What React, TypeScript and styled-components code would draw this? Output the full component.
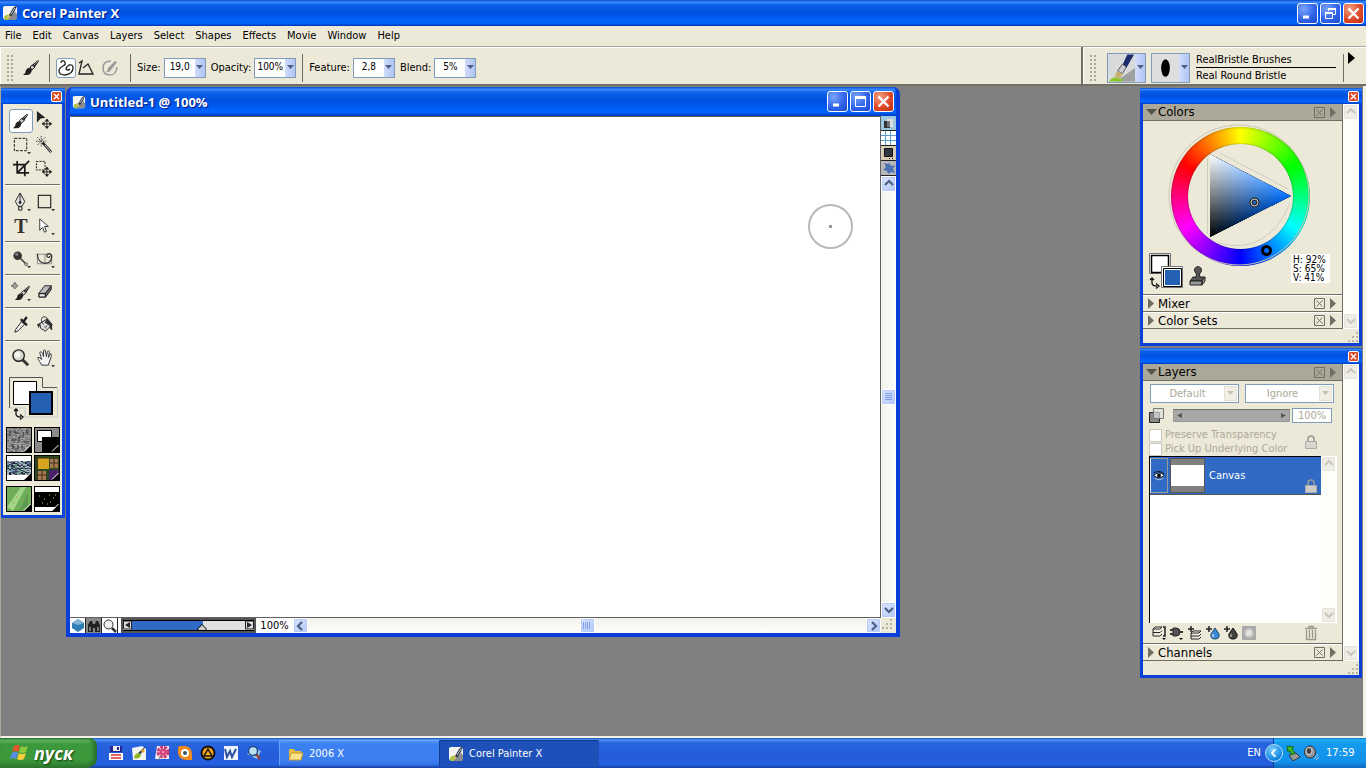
import React from "react";
import styled, { createGlobalStyle, css } from "styled-components";

const Global = createGlobalStyle`
  * { box-sizing: border-box; }
  body { margin: 0; font-family: "DejaVu Sans Condensed", "DejaVu Sans", sans-serif; font-size: 11px; line-height: 14px; color: #000; }
  button, input, select { font: inherit; color: inherit; margin: 0; padding: 0; border: 0; background: none; border-radius: 0; }
  svg { display: block; flex: none; }
`;

const titleGradient = "linear-gradient(#0a48c8 0, #3a8bff 8%, #0a5fe8 20%, #0050e0 50%, #0060fb 75%, #0064ff 88%, #0038b8 100%)";

/* ---------- shell ---------- */
const Shell = styled.div`display: flex; flex-direction: column; min-height: 100vh; background: #ece9d8;`;
const TitleBar = styled.header<{ $h: number }>`
  display: flex; align-items: center; gap: 4px; height: ${p => p.$h}px; flex: none;
  padding: 0 2px; background: ${titleGradient};
`;
const Title = styled.h1`
  flex: 1; margin: 0; color: #fff; font: bold 13px/18px "Open Sans", "Noto Sans", sans-serif;
  text-shadow: 1px 1px 1px #0a1883; white-space: nowrap;
`;
const Buttons = styled.div`display: flex; gap: 2px;`;
const WinButton = styled.button<{ $close?: boolean }>`
  width: 21px; height: 21px; border: 1px solid #fff; border-radius: 3px; display: grid; place-items: center;
  background: ${p => p.$close
    ? "radial-gradient(circle at 30% 25%, #f0a080, #e0492a 55%, #b8300c)"
    : "radial-gradient(circle at 30% 25%, #7ba4f8, #3265ea 55%, #1a48cc)"};
`;
const MenuBar = styled.nav`
  display: flex; gap: 11px; height: 20px; padding: 2px 5px 0; flex: none;
  a { color: #000; text-decoration: none; line-height: 15px; }
`;
const Toolbar = styled.div`
  display: flex; flex: none; height: 40px; border-top: 1px solid #aca899;
  border-bottom: 2px solid #716f64; box-shadow: inset 0 1px #fff;
`;
const Strip = styled.div<{ $grow?: boolean }>`
  display: flex; align-items: center; padding: 4px 0 0 5px; border-left: 1px solid #fff;
  ${p => p.$grow ? css`flex: 1; border-right: 2px solid #716f64;` : css`width: 283px;`}
`;
const Grip = styled.div`
  width: 7px; height: 27px;
  background: radial-gradient(circle, #aaa797 1px, transparent 1px) 0 0 / 4px 4px;
`;
const Divider = styled.div`width: 1px; height: 28px; background: #716f64;`;
const ToolButton = styled.button<{ $on?: boolean; $s?: number }>`
  width: ${p => p.$s ?? 20}px; height: ${p => p.$s ?? 20}px; display: grid; place-items: center; flex: none;
  ${p => p.$on && css`background: #fff; border: 1px solid #7f9db9; border-radius: 3px;`}
`;
const TypeGlyph = styled.span`
  width: 24px; font: bold 20px/24px "Liberation Serif", "Times New Roman", serif; color: #333; text-align: center;
`;
const Field = styled.label`display: flex; align-items: center; gap: 3px; white-space: nowrap;`;
const Combo = styled.span<{ $w: number }>`
  display: flex; width: ${p => p.$w}px; height: 20px; border: 1px solid #7f9db9; background: #fff;
  input { flex: 1; min-width: 0; text-align: center; font-size: 10px; padding-bottom: 1px; }
`;
const Drop = styled.button<{ $w?: number }>`
  width: ${p => p.$w ?? 10}px; flex: none; display: grid; place-items: center;
  background: linear-gradient(90deg, #d0dcfb, #b0c4f4);
`;
const BrushTile = styled.div`
  display: flex; width: 39px; height: 30px; border: 1px solid #7f9db9; background: #dedede;
  > svg { flex: 1; }
`;
const BrushNames = styled.div`
  width: 140px; margin-left: 6px; line-height: 15px;
  div + div { border-top: 1px solid #000; }
`;

/* ---------- workspace and windows ---------- */
const Workspace = styled.main`
  position: relative; flex: 1; min-height: 600px; background: #808080; overflow: hidden;
  border-left: 1px solid #aca899; border-right: 3px solid #f4f2e8; border-bottom: 2px solid #f4f2e8;
`;
const Palette = styled.section<{ $top: number }>`
  position: absolute; right: 1px; top: ${p => p.$top}px; width: 222px;
  border: solid #0a3fd8; border-width: 0 3px 3px; background: #ece9d8;
`;
const PaletteTitle = styled.div`
  display: flex; justify-content: flex-end; align-items: center; height: 16px; margin: 0 -3px; padding-right: 3px;
  background: ${titleGradient};
`;
const SmallClose = styled.button`
  width: 11px; height: 11px; border: 1px solid #fff; border-radius: 2px; background: #dc4b28; display: grid; place-items: center;
`;
const Toolbox = styled.section`
  position: absolute; left: 0; top: 2px; width: 64px; background: #ece9d8;
  border: solid #0a45dc; border-width: 0 3px 3px 2px;
`;
const ToolGroups = styled.div`padding: 5px 2px 0;`;
const ToolGroup = styled.div`
  display: grid; grid-template-columns: 24px 24px; padding-left: 4px;
  & + & { margin-top: 3px; padding-top: 5px; border-top: 1px solid #716f64; box-shadow: inset 0 1px #fff; }
`;
const ColorPair = styled.div`height: 47px; margin: 4px 2px 6px; padding: 3px 0 0 4px;`;
const Tiles = styled.div`display: grid; grid-template-columns: 26px 26px; gap: 2px; padding: 0 0 3px 3px;
  button:nth-child(n+5) { margin-top: 3px; }`;
const Tile = styled.button`width: 26px; height: 26px; border: 1px solid #000; background: #fff;`;

const DocWindow = styled.section`
  position: absolute; left: 65px; top: 1px; width: 834px; height: 550px; display: flex; flex-direction: column;
  border: solid #0a3fdc; border-width: 0 4px 4px; border-radius: 7px 7px 0 0; overflow: hidden;
  background: #0a3fdc;
`;
const DocBody = styled.div`
  flex: 1; display: grid; grid-template: 1fr 15px / 1fr 15px; background: #ece9d8; min-height: 0;
`;
const Sheet = styled.div`
  position: relative; background: #fff; border: 1px solid #606060; border-left: 0;
`;
const BrushCursor = styled.div`
  position: absolute; right: 27px; top: 87px; width: 45px; height: 45px; border: 2px solid #b8b8b8; border-radius: 50%;
  display: grid; place-items: center;
  &::after { content: ""; width: 3px; height: 3px; background: #999; }
`;
const SideBar = styled.div`display: flex; flex-direction: column;`;
const SideIcon = styled.button<{ $bg: string }>`
  height: 15px; background: ${p => p.$bg}; border-bottom: 1px solid #222; display: grid; place-items: center; flex: none;
`;
const Track = styled.div<{ $row?: boolean }>`
  flex: 1; display: flex; flex-direction: ${p => p.$row ? "row" : "column"}; align-items: stretch; min-height: 0;
  background: linear-gradient(${p => p.$row ? "180deg" : "90deg"}, #f2f1ea, #fefefb);
`;
const Spacer = styled.div`flex: 1;`;
const ScrollButton = styled.button<{ $off?: boolean; $short?: boolean }>`
  width: 15px; height: ${p => p.$short ? 15 : 16}px; flex: none; display: grid; place-items: center; border: 1px solid #fff; border-radius: 2px;
  color: ${p => p.$off ? "#c9c7ba" : "#4d6185"};
  background: ${p => p.$off ? "#efeee6" : "linear-gradient(135deg, #dbe5ff, #b3c8f7)"};
  box-shadow: inset 0 0 0 1px ${p => p.$off ? "#e5e3d8" : "#b8cbf6"};
`;
const DocStatus = styled.div`display: flex; background: #fff; min-width: 0;`;
const StatusButton = styled.button<{ $bg?: string }>`
  width: 16px; display: grid; place-items: center; background: ${p => p.$bg ?? "#fff"}; border-right: 1px solid #222;
`;
const ZoomSlider = styled.div`
  width: 135px; border: 2px solid #555; display: flex; margin-left: 3px;
`;
const ZoomText = styled.span`width: 37px; text-align: center; line-height: 15px; background: #fff;`;

/* ---------- palettes on the right ---------- */
const PaletteBody = styled.div`display: flex;`;
const Sections = styled.div`width: 201px; border-right: 1px solid #716f64;`;
const SectionHead = styled.div<{ $open?: boolean }>`
  display: flex; align-items: center; height: 17px; padding: 0 6px 0 ${p => p.$open ? 3 : 4}px; font-size: 13px;
  border-bottom: 1px solid #716f64; border-top: ${p => p.$open ? "0" : "1px solid #fff"};
  background: ${p => p.$open ? "#aca899" : "#ece9d8"};
  span { flex: 1; margin-left: ${p => p.$open ? 1 : 4}px; }
  svg:last-child { margin-left: 4px; }
`;
const PaletteFoot = styled.div`height: 15px; display: flex; justify-content: flex-end; align-items: flex-end; border-top: 1px solid #716f64; margin-top: -1px;`;
const PaletteScroll = styled.div`
  width: 16px; display: flex; flex-direction: column; justify-content: space-between; background: #fefefb;
`;
const ColorsBody = styled.div`position: relative; height: 174px; border-bottom: 1px solid #716f64; padding: 3px 0 0 25px;`;
const Wheel = styled.div`
  position: relative; width: 145px; height: 145px; display: grid; place-items: center;
  border-radius: 50%;
  > svg { position: absolute; inset: 0; }
`;
const Ring = styled.div`
  width: 139px; height: 139px; border-radius: 50%; display: grid; place-items: center;
  background: conic-gradient(#ff0, #0f0 60deg, #0ff 120deg, #00f 180deg, #f0f 240deg, #f00 300deg, #ff0);
  box-shadow: inset 0 0 3px rgba(0,0,0,.4);
  &::after { content: ""; width: 105px; height: 105px; border-radius: 50%; background: #ece9d8; box-shadow: 0 0 2px rgba(0,0,0,.5); }
`;
const Triangle = styled.g`isolation: isolate; path + path { mix-blend-mode: plus-lighter; }`;
const Swatches = styled.div`position: absolute; left: 5px; bottom: 5px;`;
const Readout = styled.div`
  position: absolute; right: 12px; bottom: 11px; width: 39px; height: 29px; padding: 1px 0 0 2px; background: #fff;
  font-size: 10px; line-height: 9px; white-space: nowrap;
`;
const LayerControls = styled.div`display: flex; flex-direction: column; padding: 3px 6px 0; color: #aca899;`;
const SelectRow = styled.div`display: flex; gap: 6px; padding-left: 1px;`;
const SelectBox = styled.label`
  display: flex; width: 89px; height: 19px; border: 1px solid #7f9db9; background: #fff; padding-right: 1px;
  select { appearance: none; flex: 1; min-width: 0; text-align: center; text-align-last: center; color: #aca899; opacity: 1; }
  span { width: 13px; height: 15px; margin-top: 1px; display: grid; place-items: center; background: #f0efe6; border: 1px solid #e3e1d5; }
`;
const OpacityRow = styled.div`display: flex; align-items: center; height: 25px; padding-right: 4px;
  input { width: 40px; height: 15px; border: 1px solid #7f9db9; background: #fff; text-align: center; color: #aca899; margin-left: 2px; }`;
const FlatSlider = styled.div`
  flex: 1; height: 13px; margin-left: 8px; background: #a8a8a8; border: 1px solid #999; border-top-color: #716f64;
  display: flex; justify-content: space-between; align-items: center; padding: 0 3px;
`;
const Checks = styled.div`display: flex; justify-content: space-between; align-items: center; padding-right: 18px;`;
const Check = styled.label`
  display: flex; align-items: center; gap: 3px; height: 14px; white-space: nowrap;
  input { appearance: none; width: 13px; height: 13px; background: #fff; border: 1px solid #cac8bb; }
`;
const LayerList = styled.div`display: flex; height: 167px; margin: 0 0 0 6px; width: 188px;`;
const LayerItems = styled.div`flex: 1; background: #fff; border-top: 1px solid #000; border-left: 1px solid #000;`;
const LayerRow = styled.div`
  display: flex; align-items: center; height: 38px; background: #316ac5; color: #fff; padding: 1px 3px 1px 0; border-bottom: 1px solid #555;
  > svg { align-self: flex-end; }
  span { flex: 1; margin-left: 4px; }
`;
const EyeBox = styled.div`width: 18px; height: 35px; border: 1px solid #9a9a9a; border-left-color: #eee; display: grid; place-items: center;`;
const Thumb = styled.div`width: 35px; height: 35px; border: 1px solid #555; margin-left: 2px; background: linear-gradient(#808080 6px, #fff 6px 27px, #808080 27px);`;
const LayerIcons = styled.div`display: flex; height: 21px; align-items: center; padding: 0 23px 0 8px; gap: 2px; border-bottom: 1px solid #716f64;
  button:last-child { margin-left: auto; }`;

/* ---------- taskbar ---------- */
const Taskbar = styled.footer`
  display: flex; height: 30px; flex: none; color: #fff;
  background: linear-gradient(#1f4fb4 0, #4a93f5 6%, #2a66e0 16%, #245ddb 50%, #2460e0 88%, #1941a5 100%);
`;
const Start = styled.button`
  display: flex; align-items: center; gap: 4px; width: 97px; padding: 0 0 1px 10px; border-radius: 0 8px 10px 0;
  font: italic bold 18px/24px "Open Sans", "Noto Sans", sans-serif; color: #fff; text-shadow: 1px 1px 2px #143d0f;
  background: linear-gradient(#2c7f2c 0, #62b862 8%, #3c983c 20%, #3c9a3c 70%, #2f7c2f 100%);
  box-shadow: inset -3px 0 4px #27692a;
`;
const Quick = styled.div`display: flex; align-items: center; gap: 5px; width: 182px; padding-left: 10px;`;
const Task = styled.button<{ $on?: boolean }>`
  display: flex; align-items: center; gap: 5px; width: 160px; height: 26px; margin-top: 2px; padding: 1px 0 0 9px; border-radius: 2px; color: #fff;
  background: ${p => p.$on ? "#1d50b8" : "linear-gradient(#5a9cfb, #3c81f3 15%, #3a7df0 85%, #2c68dc)"};
  box-shadow: inset 1px 1px 1px ${p => p.$on ? "#123a8c" : "#6aa6ff"};
`;
const Lang = styled.span`margin-left: auto; line-height: 30px; padding-right: 12px;`;
const Tray = styled.div`
  display: flex; align-items: center; width: 93px; gap: 2px;
  background: linear-gradient(#0f70c8 0, #25b0f8 6%, #149bf0 16%, #1290ea 80%, #1068c0 100%); border-left: 1px solid #0b3f94;
  time { margin-left: 5px; }
`;
const TrayArrow = styled.button`
  width: 18px; height: 18px; margin-left: -9px; border-radius: 50%; display: grid; place-items: center;
  background: radial-gradient(circle at 40% 30%, #7fd0ff, #1b8fe8 60%, #0f60c0); border: 1px solid #b8defc;
`;

/* ---------- icons ---------- */
type IconProps = { w?: number; h?: number; box?: string; children: React.ReactNode };
const Icon = ({ w = 16, h = w, box, children }: IconProps) => (
  <svg width={w} height={h} viewBox={box ?? `0 0 ${w} ${h}`} fill="none" aria-hidden="true">{children}</svg>
);
const Arrow = ({ c = "#4d6185" }: { c?: string }) => <Icon w={7} h={5}><path d="M0 0h7L3.5 4z" fill={c} /></Icon>;
const Chevron = ({ d }: { d: "up" | "down" | "left" | "right" }) => {
  const paths = { up: "M1 6l4-4 4 4", down: "M1 3l4 4 4-4", left: "M6 1L2 5l4 4", right: "M3 1l4 4-4 4" };
  return <Icon w={10}><path d={paths[d]} stroke="currentColor" strokeWidth="2.2" /></Icon>;
};
const AppIcon = ({ s = 16 }: { s?: number }) => (
  <Icon w={s} box="0 0 16 16">
    <path d="M1 2l2-1h11l1 2v10l-2 2H3l-2-2z" fill="#f4f5f3" />
    <path d="M2 13c0-3 3-4 6-3l1 2-3 3H3z" fill="#a8c43a" /><path d="M6 14l7-7 2 2v5l-2 1H6z" fill="#8a8d90" />
    <path d="M15 0l-4 3-4 7 2 2 4-6z" fill="#333b46" /><path d="M6 9l3 3-4 2z" fill="#cdb96a" /><path d="M13 3l-4 6" stroke="#c9d1da" />
  </Icon>
);
const brushShape = <><path d="M1 16q3-2 3-5 2-3 5-2l1 2q-1 5-5 5z" fill="#222" /><path d="M8 8l2-2 3 2-3 3z" fill="#ccc" stroke="#222" /><path d="M10 6l6-5 1 1-4 6z" fill="#222" /><path d="M12 6l4-4" stroke="#999" /></>;
const Brush = () => <Icon w={18}>{brushShape}</Icon>;
const Cross4 = ({ x = 0, y = 0 }) => (
  <g transform={`translate(${x} ${y})`}>
    <path d="M5.500 1v9M1 5.500h9" stroke="#222" /><path d="M5.500 0l2.500 3H3zM5.500 11L8 8H3zM0 5.500L3 3v5zM11 5.500L8 3v5z" fill="#222" />
  </g>
);
const Corner = () => <path d="M17 18h4l-2 2z" fill="#000" />;
const tools: Record<string, React.ReactNode> = {
  Brush: <g transform="translate(1 2)">{brushShape}</g>,
  "Layer Adjuster": <><path d="M2 0v12l4-4 5-1z" fill="#222" /><Cross4 x={7} y={8} /></>,
  "Rectangular Selection": <><rect x="3.500" y="3.500" width="13" height="13" stroke="#111" strokeDasharray="3 1.300" /><Corner /></>,
  "Magic Wand": <><path d="M8 8l9 10" stroke="#222" strokeWidth="2.600" /><path d="M10 10l7 8" stroke="#d8d8d8" /><path d="M6.500 1v11M1 6.500h11M2.500 2.500l8 8M10.500 2.500l-8 8" stroke="#333" strokeDasharray="1.500 1" /></>,
  Crop: <path d="M6.500 2v12.500H19M2 6h12.500v12M6 15L19 2" stroke="#1a1a1a" strokeWidth="1.800" />,
  "Selection Adjuster": <><rect x="1.500" y="2.500" width="9" height="9" stroke="#111" strokeDasharray="2 1.200" /><Cross4 x={7} y={8} /></>,
  Pen: <><path d="M9.500 1l5 9-3 5h-4l-3-5zM8 15.500h3.500V19H8z" fill="#e4e4e4" stroke="#222" /><path d="M9.500 2v8" stroke="#222" /><circle cx="9.500" cy="11" r="1.500" fill="#222" /><Corner /></>,
  "Rectangular Shape": <><rect x="3.500" y="3.500" width="13" height="13" stroke="#222" strokeWidth="1.200" /><Corner /></>,
  "Shape Selection": <><path d="M5 3v12l3-3 2 5 2-1-2-5h4z" fill="#fff" stroke="#333" /><Corner /></>,
  Dodge: <><circle cx="7" cy="7" r="4.500" fill="#333" /><circle cx="6" cy="5.500" r="1.800" fill="#777" /><path d="M10 10l6 6" stroke="#333" strokeWidth="1.500" /><circle cx="16" cy="16" r="1.500" fill="#ccc" stroke="#555" /><Corner /></>,
  "Perspective Grid": <><path d="M2.500 5.500h15v10h-15zM10.500 5v11" stroke="#888" /><path d="M2.500 5c0 6 3 10 8 10s7-3 7-7-5-4-5-1 4 2 3 0" stroke="#333" strokeWidth="1.300" /><Corner /></>,
  Cloner: <><path d="M4 1l3 3-3 3-3-3z" stroke="#444" /><path d="M4 0v8M0 4h8" stroke="#444" strokeDasharray="1 1" /><g transform="translate(3 3)">{brushShape}</g><Corner /></>,
  Eraser: <><path d="M4 12l6-8h7l-6 8z" fill="#bbb" stroke="#222" /><path d="M4 12h7v4H4zM11 12l6-8v4l-6 8z" fill="#666" stroke="#222" /><path d="M5 13h5v2H5z" fill="#eee" /></>,
  Dropper: <><path d="M11 5l5 5M13 7l3-4" stroke="#222" strokeWidth="2.600" strokeLinecap="round" /><path d="M11 7l3 3-7 7-3 1 1-3z" fill="#eee" stroke="#222" /></>,
  "Paint Bucket": <><path d="M5 9l8-5 5 6-7 7-5-3z" fill="#ddd" stroke="#222" /><path d="M9 10c-4-5-2-9 2-8q3 1 2 6" stroke="#222" /><path d="M13 4l5 6v6l-2-1-1-4-5-3z" fill="#333" /><path d="M2 10l4-2-2 6z" fill="#333" /><path d="M9 12l5-2-3 5z" fill="#999" /></>,
  Magnifier: <><path d="M12 12l6 6" stroke="#333" strokeWidth="3" /><circle cx="8" cy="8" r="6" fill="#d7d7cd" stroke="#222" strokeWidth="1.500" /><circle cx="7" cy="7" r="3" fill="#f6f6f0" /></>,
  Grabber: <><path d="M7 18c-1-3-4-5-4-8 2-1 3 2 4 2L5 5c1-2 2-1 3 1l1 3V3c1-2 2-1 2 0l1 6 1-5c1-2 2-1 2 1l-1 5 2-4c2 0 1 2 1 3l-3 9z" fill="#f2f2f2" stroke="#333" /><Corner /></>,
};
const ToolIcon = ({ name }: { name: string }) =>
  name === "Text" ? <TypeGlyph>T</TypeGlyph> : <Icon w={20} box="0 0 21 21">{tools[name]}</Icon>;
const Tri = ({ open }: { open?: boolean }) => open
  ? <Icon w={11} h={8}><path d="M0 1h11L5.500 7z" fill="#55534b" /></Icon>
  : <Icon w={7} h={11}><path d="M1 0v11l6-5.500z" fill="#716f64" /></Icon>;
const BoxX = () => <Icon w={11}><path d="M.5.500h10v10H.500zM2.500 2.500l6 6M8.500 2.500l-6 6" stroke="#716f64" /></Icon>;
const CloseGlyph = ({ s = 13 }) => <Icon w={s} box="0 0 13 13"><path d="M1.500 1.500l10 10M11.500 1.500l-10 10" stroke="#fff" strokeWidth="2.400" /></Icon>;
const MinGlyph = () => <Icon w={13}><path d="M2 10h6" stroke="#fff" strokeWidth="3" /></Icon>;
const MaxGlyph = () => <Icon w={13}><path d="M1.500 1.500h10v10h-10z" stroke="#fff" /><path d="M1 2.500h11" stroke="#fff" strokeWidth="3" /></Icon>;
const RestoreGlyph = () => <Icon w={13}><path d="M4.500 4V1.500h7v6H9M1.500 5.500h7v6h-7z" stroke="#fff" /><path d="M4 2h8M1 6h8" stroke="#fff" strokeWidth="2" /></Icon>;
const ResizeGrip = () => <Icon w={12}><path d="M9 2h2M5 6h2M9 6h2M1 10h2M5 10h2M9 10h2" stroke="#b8b4a2" strokeWidth="2" /></Icon>;
const Lock = ({ body }: { body: string }) => <Icon w={14}><path d="M4 7V4q0-3 3-3t3 3v3" stroke="#999" strokeWidth="1.500" /><path d="M1.500 6.500h11v7h-11z" fill={body} stroke="#aaa" /></Icon>;
const Eye = () => <Icon w={12} h={11} box="0 0 14 12"><path d="M1 6q6-6 12 0-6 5-12 0z" fill="#fff" stroke="#111" /><circle cx="7" cy="6" r="2.300" fill="#111" /><path d="M1 3q6-4 12 1" stroke="#111" /><path d="M2 9q5 4 10 0" stroke="#ccc" /></Icon>;
const Swap = () => <path d="M3 1v5q0 3 5 3M1 3l2-2 2 2M7 6.500L10 9l-3 2.500" stroke="#111" strokeWidth="1.300" />;
const Noise = ({ colors, y = 0, h = 24, seed = 1 }: { colors: string[]; y?: number; h?: number; seed?: number }) => {
  const cells: React.ReactNode[] = [];
  let n = seed;
  for (let r = 0; r < h; r++) for (let c = 0; c < 24; c += 2) {
    n = (n * 1103515 + 12345) % 2147483;
    cells.push(<rect key={`${r}-${c}`} x={c} y={y + r} width="2" height="1" fill={colors[(n >> 4) % colors.length]} />);
  }
  return <>{cells}</>;
};
const TileMark = () => <><path d="M24 17v7h-7z" fill="#000" /><path d="M17 23.500l6.500-6.500" stroke="#fff" /></>;
const tiles: [string, React.ReactNode][] = [
  ["Paper", <><Noise colors={["#8e8e8e", "#7c7c7c", "#999", "#666", "#7a7a7a", "#a4a4a4", "#808080"]} /><path d="M3 3v5M8 2v3h4M16 4v6M20 2v4M4 12h5M12 9v5M17 14h5M6 16v5M11 18v4M15 17v3" stroke="#333" /></>],
  ["Gradient", <><path d="M0 0h24v24H0z" fill="#8a8a8a" /><path d="M2.500 2.500h14v11h-14z" fill="#fff" stroke="#000" /><path d="M7 9h17v15H7z" fill="#000" /></>],
  ["Pattern", <Noise seed={7} y={5} h={14} colors={["#557", "#8aa", "#345", "#698", "#bbc", "#223", "#68a"]} />],
  ["Weave", <><path d="M0 0h24v24H0z" fill="#2c4a20" /><path d="M3 2h11v11H3z" fill="#d9a520" /><path d="M15 3h8v9h-8zM3 15h8v9H3z" fill="#a87850" /><path d="M14 14h10v10H14z" fill="#4a1f6a" /><path d="M0 2h24M2 0v24M19 3v9M15 7h8M7 15v9M3 19h8" stroke="#403018" /></>],
  ["Nozzle", <><path d="M0 0h24v24H0z" fill="#6fae58" /><path d="M0 20L14 0h5L6 24z" fill="#a4d488" /><path d="M12 24l9-18v14z" fill="#5c9c52" /><path d="M3 4h2M9 10h1M6 16h1M16 14h1" stroke="#b86" /></>],
  ["Look", <><path d="M0 5h24v15H0z" fill="#000" /><path d="M4 9h1M9 12h1M14 8h1M18 11h1M7 16h1M15 15h1M20 8h1M12 17h1" stroke="#9c6" /></>],
];

const Head = ({ name, open }: { name: string; open?: boolean }) => (
  <SectionHead $open={open}><Tri open={open} /><span>{name}</span><BoxX /><Tri /></SectionHead>
);
const PScroll = () => (
  <PaletteScroll><ScrollButton $off aria-label="Scroll up"><Chevron d="up" /></ScrollButton><ScrollButton $off aria-label="Scroll down"><Chevron d="down" /></ScrollButton></PaletteScroll>
);
const NumberField = ({ label, value, w = 42 }: { label: string; value: string; w?: number }) => (
  <Field>{label}<Combo $w={w}><input defaultValue={value} /><Drop as="span"><Arrow /></Drop></Combo></Field>
);
const WindowButtons = ({ restore }: { restore?: boolean }) => (
  <Buttons>
    <WinButton aria-label="Minimize"><MinGlyph /></WinButton>
    <WinButton aria-label="Maximize">{restore ? <RestoreGlyph /> : <MaxGlyph />}</WinButton>
    <WinButton $close aria-label="Close"><CloseGlyph /></WinButton>
  </Buttons>
);
const PTitle = () => <PaletteTitle><SmallClose aria-label="Close palette"><CloseGlyph s={7} /></SmallClose></PaletteTitle>;

const groups = [
  ["Brush", "Layer Adjuster", "Rectangular Selection", "Magic Wand", "Crop", "Selection Adjuster"],
  ["Pen", "Rectangular Shape", "Text", "Shape Selection"],
  ["Dodge", "Perspective Grid"], ["Cloner", "Eraser"], ["Dropper", "Paint Bucket"], ["Magnifier", "Grabber"],
];
const menus = ["File", "Edit", "Canvas", "Layers", "Select", "Shapes", "Effects", "Movie", "Window", "Help"];

const quick: [string, React.ReactNode][] = [
  ["Save", <><path d="M2 1h12v6H2z" fill="#23298c" /><path d="M5 1h7v5H5z" fill="#eee" /><path d="M9 2h2v3H9z" fill="#23298c" /><path d="M1 8h14v7H1z" fill="#fff" /><path d="M3 10h10M3 13h10" stroke="#e03030" strokeWidth="1.500" /></>],
  ["Painter", <><path d="M1 3l10-2 4 3v11H2z" fill="#f4f4ee" /><path d="M15 1L7 8l2 2z" fill="#27414d" /><path d="M3 13q1-5 5-5l2 2q-2 5-7 3z" fill="#8db51e" /><path d="M11 5l2 2" stroke="#e8a030" strokeWidth="3" /></>],
  ["Flower", <><path d="M3 1h12v13H1z" fill="#f8eef2" /><circle cx="9" cy="7" r="5" stroke="#c83c74" strokeWidth="3" strokeDasharray="3 1" /><circle cx="9" cy="7" r="3.500" fill="#d04078" /><circle cx="9" cy="7" r="1.500" fill="#f080a8" /><path d="M7 11l-3 4" stroke="#888" /></>],
  ["Viewer", <><path d="M1 3q0-2 2-2h6q6 2 6 8v6H9Q1 14 1 7z" fill="#f08a1c" /><circle cx="8" cy="8" r="4" fill="#fff" /><circle cx="8" cy="8" r="2" fill="#456" /></>],
  ["Player", <><circle cx="8" cy="8" r="6.500" fill="#f5a81c" stroke="#111" strokeWidth="2" /><path d="M8 4l4 7H4z" fill="#f5a81c" stroke="#111" strokeWidth="1.500" /></>],
  ["Word", <><path d="M1 1h14v14H1z" fill="#eef2fb" /><path d="M2 4l2 8 3-6 2 6 4-8" stroke="#2b4fa0" strokeWidth="2" /></>],
  ["Search", <><path d="M1 9l5-7 9 4-4 8z" fill="#9cc4dc" /><path d="M10 9l4 5" stroke="#a03c2c" strokeWidth="2.200" /><circle cx="7" cy="6" r="4.500" fill="#bfe0ee" stroke="#234a8c" strokeWidth="1.500" /></>],
];

const layerIcons: [string, React.ReactNode][] = [
  ["Layer commands", <><path d="M2 4l2-2h7l-2 2zM2 7.500h7l2-2M2 11h7l2-2M2 4v7" stroke="#222" fill="#fff" /><path d="M12 2h2v9h-2" stroke="#222" strokeWidth="1.500" /><path d="M11 13h4l-2 2z" fill="#000" /></>],
  ["Plug-ins", <><path d="M4 3h3q4 0 4 4t-4 4H4z" fill="#555" stroke="#222" /><path d="M1 5h3M1 9h3M11 7h3" stroke="#333" strokeWidth="2" /><path d="M10 13h4l-2 2z" fill="#000" /></>],
  ["New layer", <><path d="M4 1v6M1 4h6" stroke="#222" strokeWidth="1.500" /><path d="M4 8l2-2h8l-2 2zM4 11h8l2-2M4 14h8l2-2M4 8v6" stroke="#222" fill="#fff" /></>],
  ["New watercolor layer", <><path d="M4 1v6M1 4h6" stroke="#222" strokeWidth="1.500" /><path d="M10 3l4 6q1 5-4 5t-4-5z" fill="#3c8cd8" stroke="#246" /><path d="M8 9v3" stroke="#fff" /></>],
  ["New liquid ink layer", <><path d="M4 1v6M1 4h6" stroke="#222" strokeWidth="1.500" /><path d="M10 3l4 6q1 5-4 5t-4-5z" fill="#444" stroke="#111" /><path d="M8 9v3" stroke="#ddd" /></>],
  ["New mask", <><path d="M1 1h14v14H1z" fill="#aaa" /><circle cx="8" cy="8" r="4.500" fill="#cfcfca" /><circle cx="8" cy="8" r="2.500" fill="#e6e6e0" /></>],
  ["Delete", <path d="M2 3.500h12M6 3V1.500h4V3M3.500 5v9.500h9V5M6.500 5v8M9.500 5v8" stroke="#999689" strokeWidth="1.300" />],
];

const StripGroup = styled.div<{ $gap: number; $pad: number }>`display: flex; align-items: center; gap: ${p => p.$gap}px; padding: 0 ${p => p.$pad}px;`;

function ToolStrip() {
  return (
    <Strip $grow>
      <Grip />
      <StripGroup $gap={0} $pad={7}><ToolButton $s={22} aria-label="Brush tool"><Brush /></ToolButton></StripGroup>
      <Divider />
      <StripGroup $gap={0} $pad={6}>
        <ToolButton $on aria-label="Freehand strokes"><Icon w={18}><path d="M4 4Q4 1 7 2q3 3-1 5-4 2-4 5 0 4 6 4 8-1 8-7 0-4-4-3-3 2-3 4 2 2 4 0" stroke="#222" strokeWidth="1.300" /></Icon></ToolButton>
        <ToolButton aria-label="Straight line strokes"><Icon w={18}><path d="M2 4l3-2-3 13h14L11 5 6 9" stroke="#222" strokeWidth="1.300" /></Icon></ToolButton>
        <ToolButton $s={28} aria-label="Align to path"><Icon w={18}><path d="M10 2Q2 2 2 9t7 7q6 0 7-8" stroke="#999" strokeWidth="1.500" /><path d="M5 13q2-1 2-4l7-7 2 1-6 8q-2 3-5 2z" fill="#999" /></Icon></ToolButton>
      </StripGroup>
      <Divider />
      <StripGroup $gap={5} $pad={6}><NumberField label="Size:" value="19,0" /><NumberField label="Opacity:" value="100%" /></StripGroup>
      <Divider />
      <StripGroup $gap={5} $pad={6}><NumberField label="Feature:" value="2,8" /><NumberField label="Blend:" value="5%" /></StripGroup>
    </Strip>
  );
}

const NamesRow = styled.div`display: flex; align-items: center; margin-left: -11px; gap: 7px;`;
const More = styled.button`align-self: flex-start; margin-left: -4px;`;

function BrushStrip() {
  return (
    <Strip>
      <Grip />
      <StripGroup $gap={5} $pad={11}>
        <BrushTile>
          <Icon w={28}><path d="M0 0h28v28H0z" fill="#d8dadb" /><path d="M8 28L28 14v14z" fill="#a0a0a0" /><path d="M27 0h-7l-5 11 4 3z" fill="#1c2c6c" /><path d="M15 10l4 3-4 7-5-3z" fill="#c8ccd0" stroke="#555" /><path d="M10 17l5 3q-1 6-7 6-2-5 2-9z" fill="#c8b070" /><path d="M1 28q3-5 7-4t9 2l-3 2z" fill="#8cc82c" /></Icon>
          <Drop aria-label="Brush category"><Arrow /></Drop>
        </BrushTile>
        <BrushTile>
          <Icon w={28}><ellipse cx="14" cy="14" rx="4.500" ry="9" fill="#000" /></Icon>
          <Drop aria-label="Brush variant"><Arrow /></Drop>
        </BrushTile>
      </StripGroup>
      <NamesRow>
        <BrushNames><div>RealBristle Brushes</div><div>Real Round Bristle</div></BrushNames>
        <Divider />
        <More aria-label="Brush selector menu"><Icon w={8} h={12}><path d="M1 0v12l7-6z" fill="#000" /></Icon></More>
      </NamesRow>
    </Strip>
  );
}

export default function App() {
  return (
    <Shell>
      <Global />
      <TitleBar $h={26}><AppIcon /><Title>Corel Painter X</Title><WindowButtons restore /></TitleBar>
      <MenuBar>{menus.map(m => <a key={m} href="#">{m}</a>)}</MenuBar>
      <Toolbar>
        <ToolStrip />
        <BrushStrip />
      </Toolbar>
      <Workspace>
        <Toolbox>
          <PTitle />
          <ToolGroups>
            {groups.map((g, i) => (
              <ToolGroup key={i}>{g.map(t => <ToolButton key={t} $s={24} $on={t === "Brush"} aria-label={t}><ToolIcon name={t} /></ToolButton>)}</ToolGroup>
            ))}
          </ToolGroups>
          <ColorPair>
            <Icon w={50} h={43}>
              <path d="M.5 31V.500h33v10H48" stroke="#555" /><path d="M48.500 11v29H16v-9H1" stroke="#ccc" />
              <path d="M4.500 4.500h23v23h-23z" fill="#fff" stroke="#000" /><path d="M21 15h22v22H21z" fill="#2460b4" stroke="#000" strokeWidth="2" />
              <g transform="translate(4 31)"><Swap /></g>
            </Icon>
          </ColorPair>
          <Tiles>{tiles.map(([n, d]) => <Tile key={n} aria-label={n}><Icon w={24}>{d}<TileMark /></Icon></Tile>)}</Tiles>
        </Toolbox>

        <DocWindow>
          <TitleBar $h={29}><AppIcon s={14} /><Title as="h2">Untitled-1 @ 100%</Title><WindowButtons /></TitleBar>
          <DocBody>
            <Sheet><BrushCursor /></Sheet>
            <SideBar>
              <SideIcon $bg="#9cc8e0" aria-label="Tracing paper"><Icon w={11}><path d="M1 3h6v7H1z" fill="#333" /><path d="M4 1h6v8H4z" fill="#ddd" /><path d="M4 3h3v6H4z" fill="#777" /></Icon></SideIcon>
              <SideIcon $bg="#fff" aria-label="Grid"><Icon w={15} h={14}><path d="M0 4.500h15M0 9.500h15M4.500 0v14M9.500 0v14" stroke="#5a9ed0" /></Icon></SideIcon>
              <SideIcon $bg="#d8cbb4" aria-label="Color correction"><Icon w={13}><path d="M2.500 1.500h8v8h-8z" fill="#2f3540" stroke="#111" /><path d="M7 11.500h1M10 11.500h1" stroke="#111" /></Icon></SideIcon>
              <SideIcon $bg="#b8b8b8" aria-label="Impasto"><Icon w={13}><path d="M7 1l2 3 4-1-2 4 2 4-4-1-3 2-1-3-4-1 3-3-2-4 4 1z" fill="#4a72b4" /></Icon></SideIcon>
              <Track>
                <ScrollButton aria-label="Scroll up"><Chevron d="up" /></ScrollButton><Spacer />
                <ScrollButton aria-label="Vertical thumb"><Icon w={7} h={8}><path d="M0 .5h7M0 2.500h7M0 4.500h7M0 6.500h7" stroke="#7f9fe8" /></Icon></ScrollButton><Spacer />
                <ScrollButton aria-label="Scroll down"><Chevron d="down" /></ScrollButton>
              </Track>
            </SideBar>
            <DocStatus>
              <StatusButton aria-label="Drawing mode"><Icon w={13}><path d="M1 4l6-4 6 4v5l-6 4-6-4z" fill="#2f7db4" /><path d="M1 4l6-4 6 4-6 2z" fill="#7fb4d4" /></Icon></StatusButton>
              <StatusButton $bg="#888" aria-label="Find"><Icon w={14}><path d="M1 6l2-4h2l1 3h2l1-3h2l2 4v7H8V9H6v4H1z" fill="#222" /><path d="M3 8v4M11 8v4" stroke="#ccc" /></Icon></StatusButton>
              <StatusButton aria-label="Zoom"><Icon w={14}><circle cx="5.500" cy="5.500" r="4.500" fill="#eee" stroke="#333" /><path d="M9 9l4 4" stroke="#333" strokeWidth="2.500" /></Icon></StatusButton>
              <ZoomSlider>
                <Icon w={131} h={11}>
                  <path d="M0 0h131v11H0z" fill="#e0e0e0" /><path d="M8 0h72v11H8z" fill="#316ac5" /><path d="M.5 1h8v8h-8zM122.500 1h8v8h-8z" fill="#ddd" stroke="#222" />
                  <path d="M7 2v6L2 5zM124 2v6l5-3z" fill="#223" /><path d="M75 10.500v-2l4-4 4 4v2z" fill="#ccc" stroke="#000" /><path d="M0 .5h131M0 10.500h131" stroke="#000" />
                </Icon>
              </ZoomSlider>
              <ZoomText>100%</ZoomText>
              <Track $row>
                <ScrollButton $short aria-label="Scroll left"><Chevron d="left" /></ScrollButton><Spacer />
                <ScrollButton $short aria-label="Horizontal thumb"><Icon w={8} h={7}><path d="M.5 0v7M2.500 0v7M4.500 0v7M6.500 0v7" stroke="#7f9fe8" /></Icon></ScrollButton><Spacer />
                <ScrollButton $short aria-label="Scroll right"><Chevron d="right" /></ScrollButton>
              </Track>
            </DocStatus>
            <ResizeGrip />
          </DocBody>
        </DocWindow>

        <Palette $top={2}>
          <PTitle />
          <PaletteBody>
            <Sections>
              <Head name="Colors" open />
              <ColorsBody>
                <Wheel>
                  <Ring />
                  <Icon w={145}>
                    <defs>
                      <linearGradient id="hue" gradientUnits="userSpaceOnUse" x1="42" y1="0" x2="123" y2="0"><stop stopColor="#000" /><stop offset="1" stopColor="#0070ff" /></linearGradient>
                      <linearGradient id="light" gradientUnits="userSpaceOnUse" x1="75.400" y1="96.100" x2="42" y2="30"><stop stopColor="#000" /><stop offset="1" stopColor="#fff" /></linearGradient>
                    </defs>
                    <circle cx="71" cy="71" r="70" stroke="#cbc8b8" />
                    <path d="M39.500 34v76M52 29l68 36M50 119q50 13 72-40" stroke="#d0cdbd" />
                    <Triangle>
                      <path d="M42 30v83l81-41z" fill="url(#hue)" />
                      <path d="M42 30v83l81-41z" fill="url(#light)" />
                    </Triangle>
                    <circle cx="86.500" cy="78.500" r="3.500" stroke="#222" strokeWidth="3" /><circle cx="86.500" cy="78.500" r="3.500" stroke="#ddd" />
                    <circle cx="98.500" cy="126.500" r="4" stroke="#000" strokeWidth="3" />
                  </Icon>
                </Wheel>
                <Swatches>
                  <Icon w={58} h={37}>
                    <path d="M1.500 1.500h21v20h-21z" fill="#fff" stroke="#777" /><path d="M3.500 3.500h17v17h-17z" stroke="#000" strokeWidth="1.500" />
                    <path d="M13.500 14.500h21v21h-21z" fill="#fff" stroke="#777" /><path d="M15.500 16.500h18v18h-18z" fill="#2460b4" stroke="#000" /><path d="M16.500 17.500h16v16h-16z" stroke="#fff" />
                    <g transform="translate(1 25)"><Swap /></g>
                    <path d="M42 29l3-4h3q1-2 0-4a3.500 3.500 0 1 1 4 0q-1 2 0 4h5l-3 4z" fill="#555" stroke="#222" /><path d="M42 29h12v4H42zM54 29l3-4v4l-3 4z" fill="#999" stroke="#222" />
                  </Icon>
                </Swatches>
                <Readout>H: 92%<br />S: 65%<br />V: 41%</Readout>
              </ColorsBody>
              <Head name="Mixer" /><Head name="Color Sets" />
            </Sections>
            <PScroll />
          </PaletteBody>
          <PaletteFoot><ResizeGrip /></PaletteFoot>
        </Palette>

        <Palette $top={262}>
          <PTitle />
          <PaletteBody>
            <Sections>
              <Head name="Layers" open />
              <LayerControls>
                <SelectRow>
                  <SelectBox><select disabled aria-label="Composite method"><option>Default</option></select><span><Arrow c="#c3c0b0" /></span></SelectBox>
                  <SelectBox><select disabled aria-label="Composite depth"><option>Ignore</option></select><span><Arrow c="#c3c0b0" /></span></SelectBox>
                </SelectRow>
                <OpacityRow>
                  <Icon w={16}><path d="M.5 4.500h10v10H.500z" fill="#888" stroke="#222" /><path d="M4.500.500h10v10h-10z" fill="#ddd" fillOpacity=".7" stroke="#777" /></Icon>
                  <FlatSlider><Icon w={5}><path d="M5 0v5L0 2.500z" fill="#555" /></Icon><Icon w={5}><path d="M0 0v5l5-2.500z" fill="#555" /></Icon></FlatSlider>
                  <input disabled value="100%" aria-label="Layer opacity" readOnly />
                </OpacityRow>
                <Checks>
                  <div>
                    <Check><input type="checkbox" disabled />Preserve Transparency</Check>
                    <Check><input type="checkbox" disabled />Pick Up Underlying Color</Check>
                  </div>
                  <Lock body="#d8d6ca" />
                </Checks>
              </LayerControls>
              <LayerList>
                <LayerItems>
                  <LayerRow><EyeBox><Eye /></EyeBox><Thumb /><span>Canvas</span><Lock body="#ccc" /></LayerRow>
                </LayerItems>
                <PScroll />
              </LayerList>
              <LayerIcons>{layerIcons.map(([n, d]) => <ToolButton key={n} $s={16} aria-label={n}><Icon w={16}>{d}</Icon></ToolButton>)}</LayerIcons>
              <Head name="Channels" />
            </Sections>
            <PScroll />
          </PaletteBody>
          <PaletteFoot><ResizeGrip /></PaletteFoot>
        </Palette>
      </Workspace>
      <Taskbar>
        <Start>
          <Icon w={20} h={18}>
            <path d="M4 2q3-2 6 0L8 8Q5 6 2 8z" fill="#e8552c" /><path d="M11 2q3 2 7 0l-2 6q-4 2-7 0z" fill="#8cc83c" />
            <path d="M2 9q3-2 6 0l-2 6q-3-2-6 0z" fill="#5a8cec" /><path d="M9 9q3 2 7 0l-2 6q-4 2-7 0z" fill="#f8cc3c" />
          </Icon>
          пуск
        </Start>
        <Quick>{quick.map(([n, d]) => <ToolButton key={n} $s={18} aria-label={n}><Icon w={16}>{d}</Icon></ToolButton>)}</Quick>
        <Task><Icon w={16}><path d="M1 3h5l1 2h6v9H1z" fill="#e8bc44" /><path d="M1 14l2-7h12l-2 7z" fill="#fbe28c" stroke="#c89828" /></Icon>2006 X</Task>
        <Task $on><AppIcon />Corel Painter X</Task>
        <Lang>EN</Lang>
        <Tray>
          <TrayArrow aria-label="Show hidden icons"><Icon w={8}><path d="M5.500 0L2 4l3.500 4" stroke="#fff" strokeWidth="1.800" /></Icon></TrayArrow>
          <Icon><path d="M4 10l7-2 4 4-7 4z" fill="#999" stroke="#333" /><path d="M2 1l7 1-2 2 3 4-3 2-2-4-2 1z" fill="#3cb828" stroke="#186818" /></Icon>
          <Icon><ellipse cx="7" cy="7" rx="5.500" ry="6" fill="#999" stroke="#333" /><ellipse cx="6" cy="6" rx="3" ry="3.500" fill="#444" stroke="#ddd" /><path d="M11 14l4-5M13 15l3-3" stroke="#bcd" /></Icon>
          <time>17:59</time>
        </Tray>
      </Taskbar>
    </Shell>
  );
}
